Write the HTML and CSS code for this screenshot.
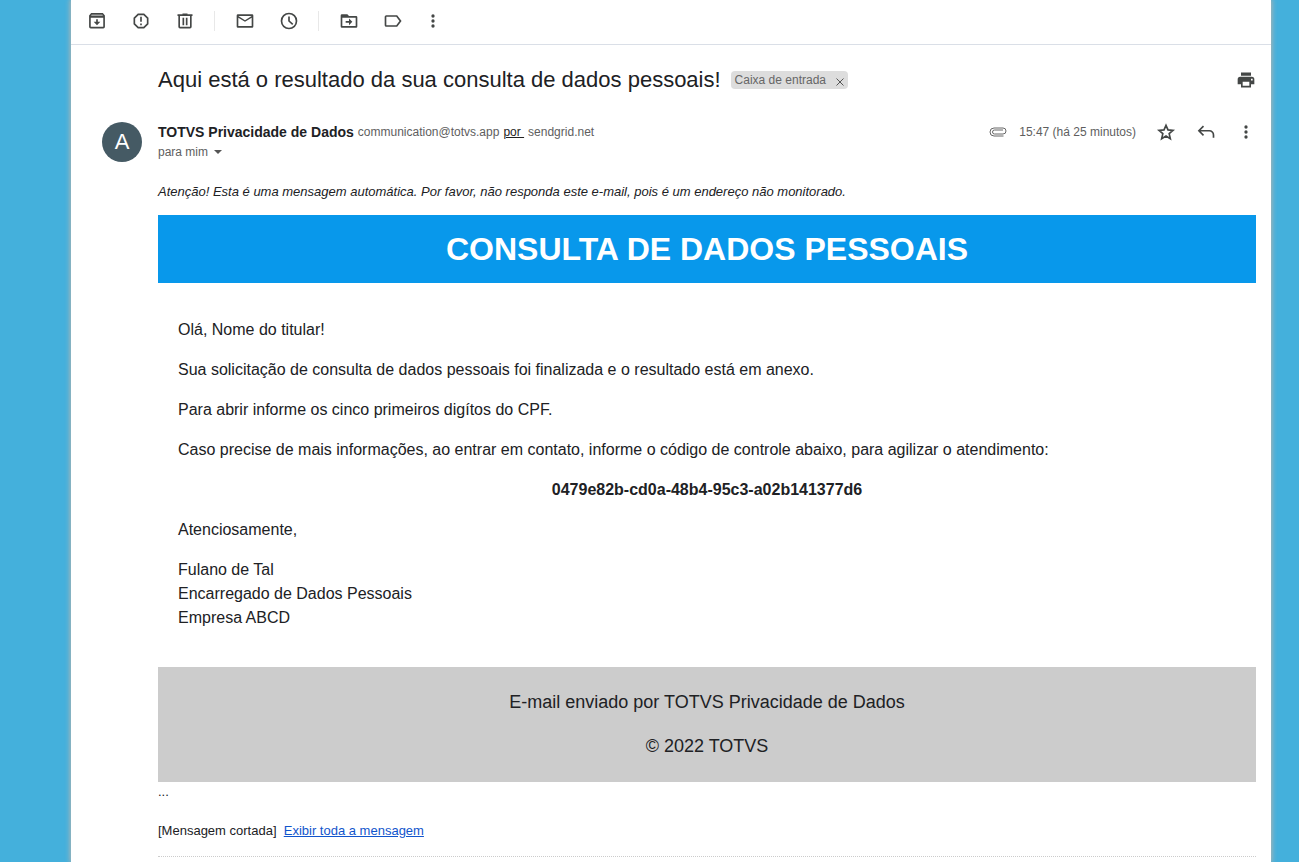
FILE: index.html
```html
<!DOCTYPE html>
<html lang="pt-BR">
  <head>
    <meta charset="UTF-8" />
    <meta name="viewport" content="width=device-width, initial-scale=1.0" />
    <title>Consulta de dados pessoais</title>
    <link rel="stylesheet" href="styles.css">
  </head>
  <body>
    <main class="mail">
      <nav class="toolbar" aria-label="Ações">
        <button class="tool" aria-label="Arquivar">
          <svg class="icon" viewBox="0 0 24 24"><path fill-rule="evenodd" d="M5 2.500h14l2.500 3V19a2 2 0 0 1-2 2h-15a2 2 0 0 1-2-2V5.500zM4.500 8v11h15V8zM5.500 4.500l-.5 1h14l-.5-1zM11 10h2v3h3l-4 4-4-4h3z"/></svg>
        </button>
        <button class="tool" aria-label="Denunciar spam">
          <svg class="icon" viewBox="0 0 24 24"><path fill-rule="evenodd" d="M8.200 3h7.600L21 8.200v7.600L15.800 21H8.200L3 15.800V8.200zM9 5L5 9v6l4 4h6l4-4V9l-4-4zM11 7h2v6h-2zM11 15h2v2h-2z"/></svg>
        </button>
        <button class="tool" aria-label="Excluir">
          <svg class="icon" viewBox="0 0 24 24"><path fill-rule="evenodd" d="M9 3h6v1h6v2h-1v13a2 2 0 0 1-2 2H6a2 2 0 0 1-2-2V6H3V4h6zM6 6v13h12V6zM9 8h2v9H9zM13 8h2v9h-2z"/></svg>
        </button>
        <span class="divider"></span>
        <button class="tool" aria-label="Marcar como não lida">
          <svg class="icon" viewBox="0 0 24 24"><path fill-rule="evenodd" d="M3.500 4h17A1.500 1.500 0 0 1 22 5.500v13a1.500 1.500 0 0 1-1.500 1.500h-17A1.500 1.500 0 0 1 2 18.500v-13A1.500 1.500 0 0 1 3.500 4zM4 8v10h16V8l-8 5zM4 6l8 5 8-5z"/></svg>
        </button>
        <button class="tool" aria-label="Adiar">
          <svg class="icon line" viewBox="0 0 24 24"><circle cx="12" cy="12" r="9"/><path d="M12 6.500V12l4.500 4"/></svg>
        </button>
        <span class="divider"></span>
        <button class="tool" aria-label="Mover para">
          <svg class="icon" viewBox="0 0 24 24"><path fill-rule="evenodd" d="M3.500 4H10l2 2h8.500A1.500 1.500 0 0 1 22 7.500v11a1.500 1.500 0 0 1-1.500 1.500h-17A1.500 1.500 0 0 1 2 18.500v-13A1.500 1.500 0 0 1 3.500 4zM4 8v10h16V8zM12 9l4 4-4 4v-3H8v-2h4z"/></svg>
        </button>
        <button class="tool" aria-label="Marcadores">
          <svg class="icon line" viewBox="0 0 24 24"><path d="M4 6h12.500l4.500 6-4.500 6H4a1 1 0 0 1-1-1V7a1 1 0 0 1 1-1z"/></svg>
        </button>
        <button class="tool narrow" aria-label="Mais">
          <svg class="icon" viewBox="0 0 24 24"><circle cx="12" cy="6" r="2"/><circle cx="12" cy="12" r="2"/><circle cx="12" cy="18" r="2"/></svg>
        </button>
      </nav>

      <header class="subject">
        <h2>Aqui está o resultado da sua consulta de dados pessoais!</h2>
        <span class="chip">Caixa de entrada
          <button class="chip-close" aria-label="Remover marcador">
            <svg viewBox="0 0 8 8"><path d="M0.500 0.500l7 7M7.500 0.500l-7 7"/></svg>
          </button>
        </span>
        <button class="action print" aria-label="Imprimir">
          <svg class="icon" viewBox="0 0 24 24"><path fill-rule="evenodd" d="M6 3h12v4H6zM5 8h14a3 3 0 0 1 3 3v6h-4v4H6v-4H2v-6a3 3 0 0 1 3-3zM8 14v5h8v-5zM18 10.500v2h2v-2z"/></svg>
        </button>
      </header>

      <article class="message">
        <div class="avatar">A</div>
        <div class="content">
          <div class="sender">
            <div class="from">
              <div class="from-line">
                <strong>TOTVS Privacidade de Dados</strong>
                <span>communication@totvs.app</span>
                <a class="via" href="#">por&nbsp;</a>
                <span>sendgrid.net</span>
              </div>
              <button class="to">para mim <span class="caret"></span></button>
            </div>
            <div class="meta">
              <svg class="clip" viewBox="0 0 18 10"><path d="M14 3H5.500a2 2 0 0 0 0 4H14a3 3 0 0 0 0-6H5a4 4 0 0 0 0 8h9.500"/></svg>
              <time>15:47 (há 25 minutos)</time>
              <button class="action" aria-label="Com estrela">
                <svg class="icon line" viewBox="0 0 24 24"><path d="M12 4l2.400 5.500 6 .5-4.600 4 1.400 6-5.200-3.200L6.800 20l1.400-6-4.600-4 6-.5z"/></svg>
              </button>
              <button class="action" aria-label="Responder">
                <svg class="icon line" viewBox="0 0 24 24"><path d="M9 5l-5.500 5.500L9 16M3.500 10.500H16a5 5 0 0 1 5 5V19"/></svg>
              </button>
              <button class="action" aria-label="Mais opções">
                <svg class="icon" viewBox="0 0 24 24"><circle cx="12" cy="6" r="2"/><circle cx="12" cy="12" r="2"/><circle cx="12" cy="18" r="2"/></svg>
              </button>
            </div>
          </div>

          <p class="notice">Atenção! Esta é uma mensagem automática. Por favor, não responda este e-mail, pois é um endereço não monitorado.</p>
          <h1 class="banner">CONSULTA DE DADOS PESSOAIS</h1>
          <div class="text">
            <p>Olá, Nome do titular!</p>
            <p>Sua solicitação de consulta de dados pessoais foi finalizada e o resultado está em anexo.</p>
            <p>Para abrir informe os cinco primeiros digítos do CPF.</p>
            <p>Caso precise de mais informações, ao entrar em contato, informe o código de controle abaixo, para agilizar o atendimento:</p>
            <p class="code">0479e82b-cd0a-48b4-95c3-a02b141377d6</p>
            <p>Atenciosamente,</p>
            <p>Fulano de Tal<br>Encarregado de Dados Pessoais<br>Empresa ABCD</p>
          </div>
          <footer class="credits">
            <p>E-mail enviado por TOTVS Privacidade de Dados</p>
            <p>© 2022 TOTVS</p>
          </footer>
          <div class="dots">...</div>
          <div class="clipped">[Mensagem cortada]&nbsp; <a href="#">Exibir toda a mensagem</a></div>
        </div>
      </article>
    </main>
  </body>
</html>
```
FILE: styles.css
```css
* {
  box-sizing: border-box;
}

body {
  margin: 0;
  padding: 0 28px 0 71px;
  background: #44b0dc;
  color: #202124;
  font-family: "Liberation Sans", Arial, sans-serif;
}

button {
  display: flex;
  align-items: center;
  justify-content: center;
  padding: 0;
  border: none;
  background: none;
  color: inherit;
  font: inherit;
  cursor: pointer;
}

h1,
h2,
p {
  margin: 0;
}

.mail {
  min-height: 100vh;
  background: #fff;
  box-shadow: 0 0 5px 1px #b4b4b0;
}

.icon {
  width: 20px;
  height: 20px;
  fill: #444746;
}

.line {
  fill: none;
  stroke: #444746;
  stroke-width: 2;
}

.toolbar {
  display: flex;
  align-items: center;
  height: 45px;
  padding: 0 4px 3px;
  border-bottom: 1px solid #dadfe7;
}

.tool {
  width: 44px;
  height: 40px;
}

.narrow {
  width: 36px;
}

.divider {
  width: 1px;
  height: 20px;
  margin: 0 8px 0 7px;
  background: #e8e8e8;
}

.subject {
  display: flex;
  align-items: center;
  height: 70px;
  padding: 0 5px 0 87px;
}

.subject h2 {
  font-size: 22px;
  font-weight: 400;
}

.chip {
  display: flex;
  align-items: center;
  gap: 10px;
  height: 18px;
  margin-left: 10px;
  padding: 0 4px;
  border-radius: 4px;
  background: #ddd;
  color: #666;
  font-size: 12px;
}

.chip-close {
  padding-top: 4px;
}

.chip-close svg {
  width: 8px;
  height: 8px;
  stroke: #555;
}

.action {
  width: 40px;
  height: 20px;
}

.print {
  margin-left: auto;
}

.message {
  display: flex;
  gap: 16px;
  padding: 7px 15px 0 31px;
}

.avatar {
  flex: none;
  width: 40px;
  height: 40px;
  border-radius: 50%;
  background: #455a64;
  color: #fff;
  font-size: 22px;
  line-height: 40px;
  text-align: center;
}

.content {
  flex: 1;
  min-width: 0;
  border-bottom: 1px dotted #ccc;
}

.sender {
  display: flex;
  justify-content: space-between;
  color: #5e5e5e;
  font-size: 12px;
  line-height: 20px;
}

.from-line {
  display: flex;
  gap: 4px;
}

.from strong {
  color: #202124;
  font-size: 14px;
}

.via {
  color: #222;
}

.caret {
  margin-left: 6px;
  border: 4px solid transparent;
  border-top-color: #555;
  border-bottom: none;
}

.meta {
  display: flex;
  height: 20px;
  margin-right: -10px;
}

.meta time {
  margin: 0 10px 0 12px;
}

.clip {
  width: 18px;
  height: 10px;
  margin-top: 5px;
  fill: none;
  stroke: #666;
}

.notice {
  margin-top: 20px;
  font-size: 13px;
  font-style: italic;
  line-height: 20px;
}

.banner {
  margin-top: 13px;
  background: #0898eb;
  color: #fff;
  font-size: 32px;
  line-height: 68px;
  text-align: center;
}

.text {
  padding: 35px 20px 37px;
  font-size: 16px;
  line-height: 24px;
}

.text p + p,
.credits p + p {
  margin-top: 16px;
}

.code {
  font-weight: 700;
  text-align: center;
}

.credits {
  padding: 21px 20px 22px;
  background: #ccc;
  font-size: 18px;
  line-height: 28px;
  text-align: center;
}

.dots {
  font-size: 13px;
  line-height: 20px;
}

.clipped {
  padding: 19px 0 15px;
  font-size: 13px;
  line-height: 20px;
}

.clipped a {
  color: #15c;
}
```
